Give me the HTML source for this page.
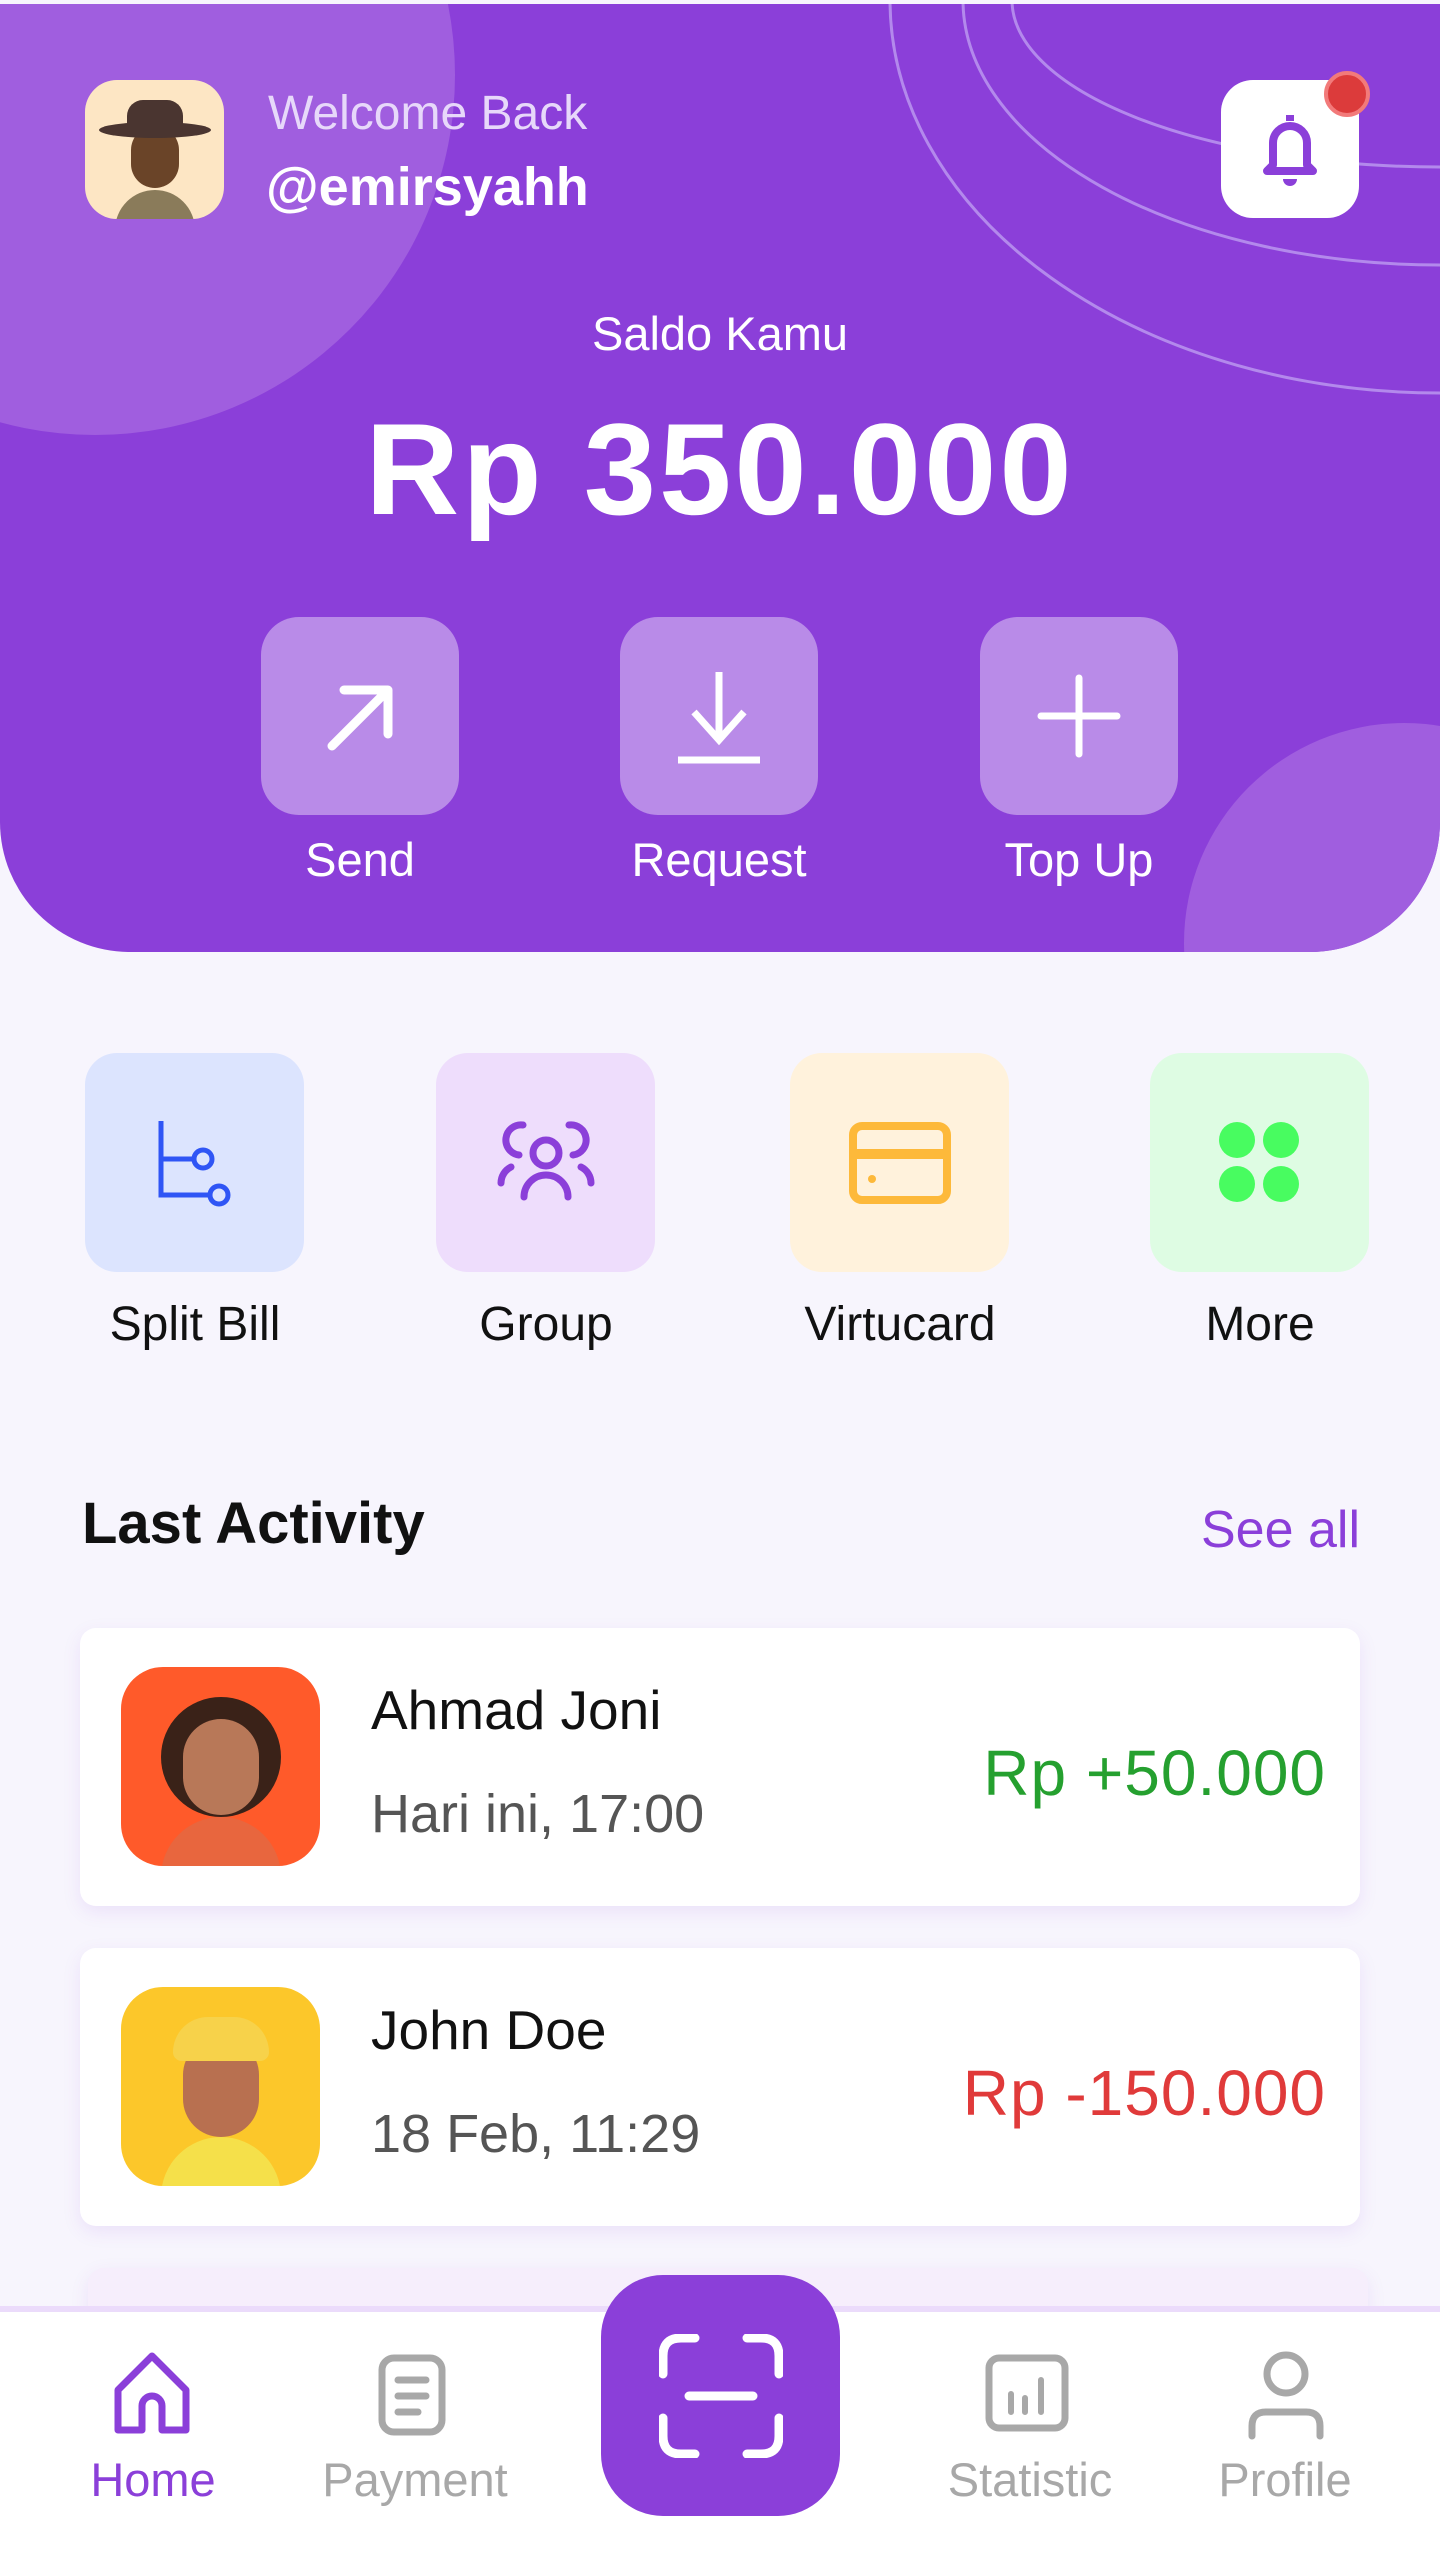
<!DOCTYPE html>
<html><head><meta charset="utf-8"><style>
*{margin:0;padding:0;box-sizing:border-box}
body{width:1440px;height:2560px;background:#F7F5FD;font-family:"Liberation Sans",sans-serif;position:relative;overflow:hidden}
.abs{position:absolute}
.hdr{position:absolute;left:0;top:4px;width:1440px;height:948px;background:#8B3FD9;border-radius:0 0 130px 130px;overflow:hidden}
.btn{position:absolute;top:617px;width:198px;height:198px;border-radius:38px;background:#B98BE8;display:flex;align-items:center;justify-content:center}
.bl{position:absolute;top:832px;width:300px;text-align:center;color:#fff;font-size:47px}
.qm{position:absolute;top:1053px;width:219px;height:219px;border-radius:32px;display:flex;align-items:center;justify-content:center}
.ql{position:absolute;top:1297px;width:320px;text-align:center;color:#111;font-size:48px}
.card{position:absolute;left:80px;width:1280px;height:278px;background:#fff;border-radius:16px;box-shadow:0 6px 18px rgba(139,63,217,.10)}
.av{position:absolute;left:41px;top:39px;width:199px;height:199px;border-radius:42px;overflow:hidden}
.nm{position:absolute;left:291px;top:50px;font-size:55px;color:#111}
.tm{position:absolute;left:291px;top:155px;font-size:54px;color:#555}
.amt{position:absolute;right:34px;top:108px;font-size:64px;letter-spacing:1px}
.nl{position:absolute;top:2452px;font-size:47px;color:#A8A8A8;text-align:center;width:260px}
</style></head><body>
<div class="hdr">
<div class="abs" style="left:-265px;top:-289px;width:720px;height:720px;border-radius:50%;background:#A05EDF"></div>
<div class="abs" style="left:1184px;top:719px;width:440px;height:440px;border-radius:50%;background:#A05EDF"></div>
<svg class="abs" style="left:0;top:0" width="1440" height="948"><g fill="none" stroke="#B389EC" stroke-width="3">
<ellipse cx="1440" cy="-4" rx="550" ry="393"/>
<ellipse cx="1440" cy="-4" rx="477" ry="265"/>
<ellipse cx="1440" cy="-4" rx="428" ry="167"/>
</g></svg>
<div class="abs" style="left:85px;top:76px;width:139px;height:139px;border-radius:32px;background:#FDE6C4;overflow:hidden">
<div class="abs" style="left:30px;top:110px;width:80px;height:60px;border-radius:40px 40px 0 0;background:#8A7B5A"></div>
<div class="abs" style="left:46px;top:46px;width:48px;height:62px;border-radius:24px;background:#6A4428"></div>
<div class="abs" style="left:14px;top:42px;width:112px;height:16px;border-radius:50%;background:#4A3530"></div>
<div class="abs" style="left:42px;top:20px;width:56px;height:32px;border-radius:16px 16px 4px 4px;background:#4A3530"></div>
</div>
<div class="abs" style="left:268px;top:82px;font-size:48px;color:#E7D8FA">Welcome Back</div>
<div class="abs" style="left:266px;top:152px;font-size:54px;color:#fff;font-weight:bold">@emirsyahh</div>
<div class="abs" style="left:1221px;top:76px;width:138px;height:138px;border-radius:32px;background:#fff;display:flex;align-items:center;justify-content:center">
<svg width="70" height="80" viewBox="0 0 70 80"><path d="M35 6v6M18 56V34a17 17 0 0 1 34 0v22l6 6H12z" fill="none" stroke="#8B3FD9" stroke-width="8" stroke-linejoin="round"/><path d="M28 70a7 7 0 0 0 14 0" fill="#8B3FD9"/></svg></div>
<div class="abs" style="left:1324px;top:67px;width:46px;height:46px;border-radius:50%;background:#DC3B3B;border:4px solid #F27A7A"></div>
<div class="abs" style="left:0;top:302px;width:1440px;text-align:center;font-size:47px;color:#fff">Saldo Kamu</div>
<div class="abs" style="left:0;top:390px;width:1440px;text-align:center;font-size:130px;color:#fff;font-weight:bold;letter-spacing:3px">Rp 350.000</div>
</div>
<div class="btn" style="left:261px"><svg width="80" height="80"><path d="M12 70L68 14M24 14h44v44" fill="none" stroke="#fff" stroke-width="9" stroke-linecap="round" stroke-linejoin="round"/></svg></div>
<div class="btn" style="left:620px"><svg width="90" height="100"><path d="M45 6v68M20 46l25 28 25-28M4 94h82" fill="none" stroke="#fff" stroke-width="7"/></svg></div>
<div class="btn" style="left:980px"><svg width="84" height="84"><path d="M42 4v76M4 42h76" fill="none" stroke="#fff" stroke-width="7" stroke-linecap="round"/></svg></div>
<div class="bl" style="left:210px">Send</div>
<div class="bl" style="left:569px">Request</div>
<div class="bl" style="left:929px">Top Up</div>

<div class="qm" style="left:85px;background:#DCE4FE"><svg width="100" height="100" viewBox="0 0 100 100"><path d="M16 8v74h50M16 46h34" fill="none" stroke="#2F55F5" stroke-width="5"/><circle cx="58" cy="46" r="9" fill="none" stroke="#2F55F5" stroke-width="5"/><circle cx="74" cy="82" r="9" fill="none" stroke="#2F55F5" stroke-width="5"/></svg></div>
<div class="qm" style="left:436px;background:#EEDDFC"><svg width="110" height="100" viewBox="0 0 110 100"><g fill="none" stroke="#8B3FD9" stroke-width="7" stroke-linecap="round"><circle cx="55" cy="40" r="13"/><path d="M33 84a22 22 0 0 1 44 0M28 42a13 13 0 0 1 4-30M82 42a13 13 0 0 0-4-30M10 70a18 18 0 0 1 10-16M100 70a18 18 0 0 0-10-16"/></g></svg></div>
<div class="qm" style="left:790px;background:#FFF2DC"><svg width="104" height="84" viewBox="0 0 104 84"><rect x="5" y="5" width="94" height="74" rx="9" fill="none" stroke="#FDB93A" stroke-width="8"/><path d="M5 33h94" stroke="#FDB93A" stroke-width="10"/><circle cx="24" cy="58" r="4" fill="#FDB93A"/></svg></div>
<div class="qm" style="left:1150px;background:#DEFCE3"><svg width="84" height="84"><g fill="#48FC60"><circle cx="19" cy="19" r="18"/><circle cx="63" cy="19" r="18"/><circle cx="19" cy="63" r="18"/><circle cx="63" cy="63" r="18"/></g></svg></div>
<div class="ql" style="left:35px">Split Bill</div>
<div class="ql" style="left:386px">Group</div>
<div class="ql" style="left:740px">Virtucard</div>
<div class="ql" style="left:1100px">More</div>

<div class="abs" style="left:82px;top:1490px;font-size:58px;font-weight:bold;color:#111">Last Activity</div>
<div class="abs" style="right:80px;top:1500px;font-size:52px;color:#8B3FD9">See all</div>

<div class="card" style="top:1628px">
<div class="av" style="background:#FF5A2A"><div class="abs" style="left:40px;top:150px;width:120px;height:80px;border-radius:60px 60px 0 0;background:#E8663E"></div><div class="abs" style="left:40px;top:30px;width:120px;height:120px;border-radius:50%;background:#3A2218"></div><div class="abs" style="left:62px;top:52px;width:76px;height:96px;border-radius:38px;background:#B87858"></div></div>
<div class="nm">Ahmad Joni</div><div class="tm">Hari ini, 17:00</div>
<div class="amt" style="color:#25A02F">Rp +50.000</div></div>
<div class="card" style="top:1948px">
<div class="av" style="background:#FCC72A"><div class="abs" style="left:40px;top:150px;width:120px;height:80px;border-radius:60px 60px 0 0;background:#F5E04A"></div><div class="abs" style="left:62px;top:50px;width:76px;height:100px;border-radius:38px;background:#B87050"></div><div class="abs" style="left:52px;top:30px;width:96px;height:44px;border-radius:40px 40px 10px 10px;background:#F7D24A"></div></div>
<div class="nm">John Doe</div><div class="tm">18 Feb, 11:29</div>
<div class="amt" style="color:#E03A3A">Rp -150.000</div></div>
<div class="card" style="top:2268px;left:88px;background:#F6EEFC"></div>

<div class="abs" style="left:0;top:2306px;width:1440px;height:254px;background:#fff;border-top:6px solid #EBDBFB"></div>
<div class="abs" style="left:601px;top:2275px;width:239px;height:241px;border-radius:62px;background:#8B3FD9;display:flex;align-items:center;justify-content:center">
<svg width="124" height="124" viewBox="0 0 124 124"><g fill="none" stroke="#fff" stroke-width="9" stroke-linecap="round"><path d="M36 4H22Q4 4 4 22v18M88 4h14q18 0 18 18v18M4 84v18q0 18 18 18h14M120 84v18q0 18-18 18H88M30 62h64"/></g></svg></div>
<svg class="abs" style="left:110px;top:2350px" width="84" height="86" viewBox="0 0 84 86"><path d="M8 40L42 6l34 34v40H52V56a10 10 0 0 0-20 0v24H8z" fill="none" stroke="#8B3FD9" stroke-width="7" stroke-linejoin="round"/></svg>
<svg class="abs" style="left:378px;top:2354px" width="68" height="82" viewBox="0 0 68 82"><rect x="4" y="4" width="60" height="74" rx="12" fill="none" stroke="#A8A8A8" stroke-width="7"/><path d="M20 26h28M20 42h28M20 58h20" stroke="#A8A8A8" stroke-width="7" stroke-linecap="round"/></svg>
<svg class="abs" style="left:985px;top:2354px" width="84" height="78" viewBox="0 0 84 78"><rect x="4" y="4" width="76" height="70" rx="10" fill="none" stroke="#A8A8A8" stroke-width="7"/><path d="M26 40v18M40 44v14M56 26v32" stroke="#A8A8A8" stroke-width="6" stroke-linecap="round"/></svg>
<svg class="abs" style="left:1246px;top:2350px" width="80" height="90" viewBox="0 0 80 90"><circle cx="40" cy="24" r="19" fill="none" stroke="#A8A8A8" stroke-width="7"/><path d="M6 86V76q0-14 14-14h40q14 0 14 14v10" fill="none" stroke="#A8A8A8" stroke-width="7" stroke-linecap="round"/></svg>
<div class="nl" style="left:23px;color:#8B3FD9">Home</div>
<div class="nl" style="left:285px">Payment</div>
<div class="nl" style="left:900px">Statistic</div>
<div class="nl" style="left:1155px">Profile</div>
</body></html>
